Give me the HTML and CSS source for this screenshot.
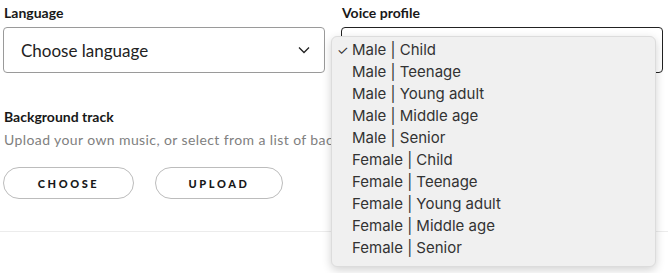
FILE: index.html
```html
<!DOCTYPE html>
<html lang="en">
<head>
    <meta charset="UTF-8">
    <meta name="viewport" content="width=device-width, initial-scale=1.0">
    <title>Voice settings</title>
    <link rel="stylesheet" href="styles.css">
</head>
<body>

<div class="panel">
    <div class="row">
        <!-- Language -->
        <div class="field">
            <div class="field-label">Language</div>
            <div class="select">
                <span>Choose language</span>
                <svg class="chevron" width="12" height="8" viewBox="0 0 12 8"><path d="M1 1.5 6 6.5 11 1.5" fill="none" stroke="#222" stroke-width="1.3"/></svg>
            </div>
        </div>

        <!-- Voice profile -->
        <div class="field voice">
            <div class="field-label">Voice profile</div>
            <div class="select focused"></div>
            <ul class="menu">
                <li class="checked">Male | Child</li>
                <li>Male | Teenage</li>
                <li>Male | Young adult</li>
                <li>Male | Middle age</li>
                <li>Male | Senior</li>
                <li>Female | Child</li>
                <li>Female | Teenage</li>
                <li>Female | Young adult</li>
                <li>Female | Middle age</li>
                <li>Female | Senior</li>
            </ul>
        </div>
    </div>

    <div class="track">
        <div class="field-label">Background track</div>
        <p class="hint">Upload your own music, or select from a list of background tracks we have for you.</p>
        <div class="buttons">
            <button class="pill choose">CHOOSE</button>
            <button class="pill upload">UPLOAD</button>
        </div>
    </div>

    <hr class="divider">
</div>

</body>
</html>
```

FILE: styles.css
```css
html, body {
    height: 273px;
}
body {
    margin: 0;
    font-family: Lato, "Liberation Sans", sans-serif;
    background: white;
    color: #181818;
    overflow: hidden;
}
.panel {
    padding: 5px 0 0 3px;
}
.row {
    display: flex;
    gap: 16px;
}
.field {
    width: 322px;
}
.voice {
    position: relative;
    z-index: 1;
}
.field-label {
    font-weight: bold;
    font-size: 14px;
    padding-left: 1px;
    height: 22px;
    line-height: 16px;
}
.select {
    height: 46px;
    box-sizing: border-box;
    border: 1px solid #9a9a9a;
    border-radius: 4px;
    display: flex;
    align-items: center;
    justify-content: space-between;
    padding: 0 14px 0 17px;
    font-size: 17px;
    color: #222;
}
.select.focused {
    border-color: #222;
}
.menu {
    position: absolute;
    left: -10px;
    top: 31px;
    width: 323px;
    margin: 0;
    padding: 2px 0 7px;
    list-style: none;
    background: #f0f0f0;
    border: 1px solid #dcdcdc;
    border-radius: 6px;
    box-shadow: 0 3px 10px rgba(0, 0, 0, 0.18);
    font-family: Inter, "Liberation Sans", sans-serif;
    font-size: 15px;
    color: #333;
}
.menu li {
    height: 22px;
    line-height: 22px;
    padding-left: 20px;
    position: relative;
}
.menu li.checked::before {
    content: "✓";
    position: absolute;
    left: 5px;
    font-size: 13px;
}
.track {
    margin-top: 36px;
}
.hint {
    margin: 0 0 0 1px;
    font-size: 14px;
    color: #808080;
    letter-spacing: 0.4px;
    white-space: nowrap;
}
.buttons {
    display: flex;
    gap: 21px;
    margin-top: 19px;
}
.pill {
    height: 32px;
    background: white;
    border: 1px solid #bcbcbc;
    border-radius: 16px;
    font-family: Lato, "Liberation Sans", sans-serif;
    font-weight: 900;
    font-size: 11px;
    letter-spacing: 2.6px;
    color: #181818;
    padding: 0;
}
.choose {
    width: 131px;
}
.upload {
    width: 128px;
}
.divider {
    margin: 32px 0 0 -3px;
    border: none;
    border-top: 1px solid #ececec;
}
```
